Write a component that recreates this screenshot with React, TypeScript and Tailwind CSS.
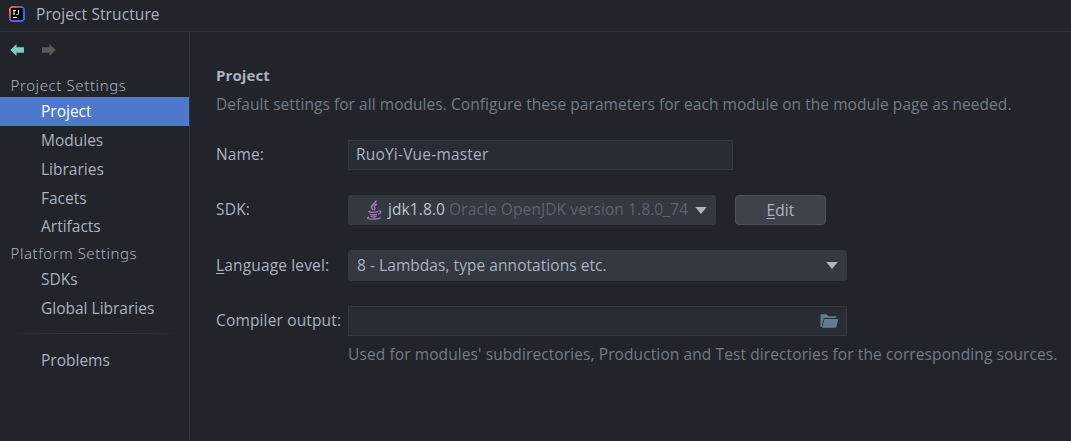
import React from "react";

function AppLogo() {
  return (
    <svg width="16" height="16" viewBox="0 0 16 16" className="shrink-0">
      <defs>
        <linearGradient id="logo" x1="0" y1="0.2" x2="1" y2="0.6">
          <stop offset="0" stopColor="#fb7f24" />
          <stop offset="0.2" stopColor="#f0503c" />
          <stop offset="0.4" stopColor="#e0387c" />
          <stop offset="0.6" stopColor="#2f6bea" />
          <stop offset="1" stopColor="#1478f2" />
        </linearGradient>
      </defs>
      <path d="M2.500 0h11L16 2.500v11L13.500 16h-11L0 13.500v-11z" fill="url(#logo)" />
      <path d="M0 11l2-1v4h8l-1 2H2.500L0 13.500z" fill="#8a4fc0" />
      <rect x="2" y="2" width="12" height="12" fill="#000" />
      <path d="M4 4.500h3M5 4.500v3.500M4 8h2M9.500 4v3.500q0 1-1 1H7.500" stroke="#fff" strokeWidth="1" fill="none" />
      <path d="M4 11.500h4" stroke="#fff" strokeWidth="1.200" />
    </svg>
  );
}

function Arrow({ className }: { className: string }) {
  return (
    <svg width="14" height="12" viewBox="0 0 14 12" className={className}>
      <path d="M0.300 6L6.500 0v3.200H14v5.600H6.500v3.200z" fill="currentColor" />
    </svg>
  );
}

function JavaIcon() {
  return (
    <svg width="17" height="20" viewBox="0 0 17 20" className="shrink-0 text-[#a67bc4]" fill="none" stroke="currentColor">
      <path d="M9.800 0.500C10.800 3.500 5 4.500 5.500 7.300C5.700 8.500 7 9.200 7.300 10" strokeWidth="1.500" />
      <path d="M11 4.200C8.300 5.200 7.500 6 8.600 7.300C9.300 8.300 9 9.300 8.200 10" strokeWidth="1.300" />
      <path d="M4.500 11C1.500 11.500 2.500 12.300 6 12.300C9 12.300 11 12.200 12 11.600M12.500 11C15.800 10.500 15.300 13.200 12 14.300" strokeWidth="1.200" />
      <path d="M4 14.300C5 15 8.500 15 11 14.400M4.800 16.500C6 17 8.500 17 10.500 16.400" strokeWidth="1.300" />
      <path d="M3 17.200C0 18 1.500 19.200 6.500 19.200C10.500 19.200 14 18.900 14.500 17.600" strokeWidth="1.300" />
    </svg>
  );
}

function Caret() {
  return (
    <svg width="12" height="7" viewBox="0 0 12 7" className="shrink-0">
      <path d="M0.300 0h11.400L6 7z" fill="#afb6c4" />
    </svg>
  );
}

function FolderIcon() {
  return (
    <svg width="19" height="14" viewBox="0 0 19 14" className="shrink-0">
      <path d="M0.500 13V1.200Q0.500 0.300 1.400 0.300H6.500L8.500 2.300H15.500Q16.300 2.300 16.300 3.200V4H3.800L1.700 13z" fill="#607d8b" />
      <path d="M4.500 5H18.300L16.300 13.300Q16.200 13.700 15.700 13.700H2z" fill="#607d8b" />
    </svg>
  );
}

function NavItem({ label, className = "h-[29px]" }: { label: string; className?: string }) {
  return <div className={`flex items-center pb-0.5 pl-[41px] tracking-normal ${className}`}>{label}</div>;
}

function NavHeader({ label, className }: { label: string; className: string }) {
  return <div className={`flex items-center pl-[10.500px] font-['Noto_Sans',sans-serif] text-[15px] font-light ${className}`}>{label}</div>;
}

export default function App() {
  return (
    <div className="flex h-[441px] w-[1071px] flex-col overflow-hidden whitespace-nowrap bg-[#21252b] font-['Open_Sans','Noto_Sans',sans-serif] text-[15.5px] leading-5 tracking-[0.1px] text-[#a9b2c0]">
      <header className="flex h-8 shrink-0 items-center border-b border-[#31353d] pb-[3px] pl-[9px]">
        <AppLogo />
        <span className="ml-[11px]">Project Structure</span>
      </header>
      <div className="flex min-h-0 flex-1">
        <nav className="w-[190px] shrink-0 border-r border-[#333841]">
          <div className="flex h-9 items-center pl-[10px]">
            <Arrow className="text-[#80cbc4]" />
            <Arrow className="ml-[18px] rotate-180 text-[#5a5a5a]" />
          </div>
          <NavHeader label="Project Settings" className="h-[29px] pt-[5px] tracking-[0.6px]" />
          <NavItem label="Project" className="h-[29px] bg-[#4d78cc] text-white" />
          <NavItem label="Modules" />
          <NavItem label="Libraries" />
          <NavItem label="Facets" />
          <NavItem label="Artifacts" className="h-[28px]" />
          <NavHeader label="Platform Settings" className="h-[25px] pb-0.5 tracking-[0.550px]" />
          <NavItem label="SDKs" className="h-[28px]" />
          <NavItem label="Global Libraries" />
          <div className="mx-[6px] mt-[10px] mb-[12px] h-px bg-linear-to-r from-transparent via-[#373b41] to-transparent" />
          <NavItem label="Problems" />
        </nav>
        <main className="flex flex-1 flex-col pl-[26px] pt-[33px]">
          <h1 className="text-[15px] font-bold">Project</h1>
          <p className="mt-[9px] tracking-[0.05px] text-[#737b88]">
            Default settings for all modules. Configure these parameters for each module on the module page as needed.
          </p>
          <div className="mt-[26px] grid grid-cols-[132px_1fr] items-center gap-y-[25px]">
            <label className="pb-0.5">Name:</label>
            <div className="flex h-[30px] w-[385px] items-center border border-[#333841] bg-[#282c34] pb-0.5 pl-[7px] tracking-[0.2px]">RuoYi-Vue-master</div>

            <label className="pb-0.5 tracking-[0.2px]">SDK:</label>
            <div className="flex">
              <div className="flex h-[30px] w-[368px] items-center rounded-[3px] bg-[#333841] pl-[18px] pr-[9px]">
                <JavaIcon />
                <span className="ml-[5px] pb-0.5 text-[#bcc4d0]">jdk1.8.0</span>
                <span className="ml-1 flex-1 pb-0.5 text-[#5c6370]">Oracle OpenJDK version 1.8.0_74</span>
                <Caret />
              </div>
              <button className="ml-[19px] h-[30px] w-[91px] rounded-[4px] border border-[#4a4f59] bg-[#3d424b]">
                <span className="underline underline-offset-2">E</span>dit
              </button>
            </div>

            <label className="pb-0.5 tracking-[0.150px]">
              <span className="underline underline-offset-2">L</span>anguage level:
            </label>
            <div className="flex h-[31px] w-[499px] items-center justify-between rounded-[3px] bg-[#333841] pl-[9px] pr-[9px]">
              <span className="pb-0.5 tracking-[0.050px]">8 - Lambdas, type annotations etc.</span>
              <Caret />
            </div>

            <label className="pb-0.5 tracking-[0.150px]">Compiler output:</label>
            <div className="flex h-[30px] w-[499px] items-center justify-end border border-[#333841] bg-[#282c34] pr-[7px]">
              <FolderIcon />
            </div>
          </div>
          <p className="mt-[8px] pl-[132px] text-[#737b88]">
            Used for modules' subdirectories, Production and Test directories for the corresponding sources.
          </p>
        </main>
      </div>
    </div>
  );
}
